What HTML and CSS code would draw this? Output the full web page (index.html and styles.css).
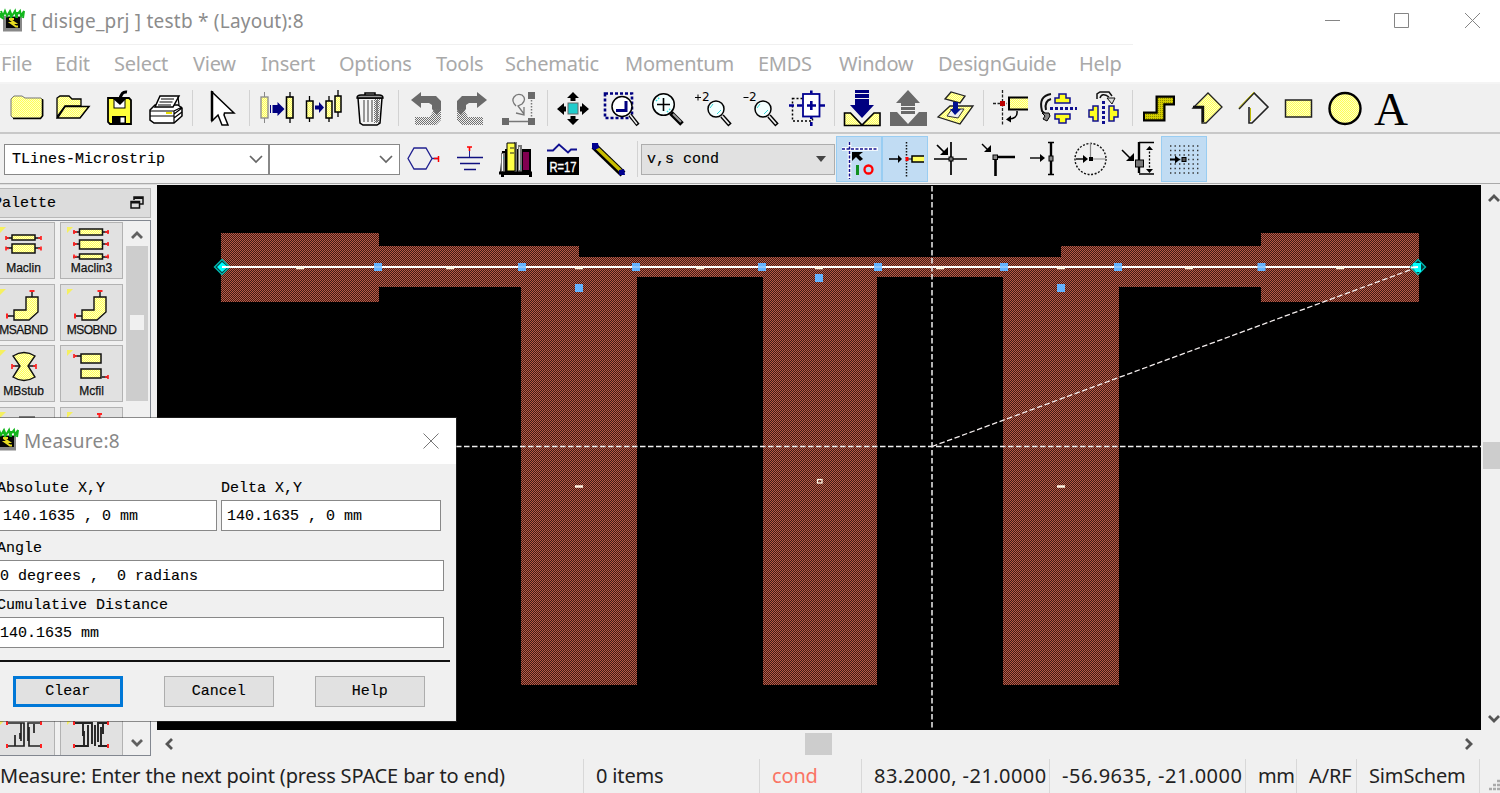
FILE: index.html
```html
<!DOCTYPE html>
<html lang="en">
<head>
<meta charset="utf-8">
<title>testb (Layout):8</title>
<link rel="stylesheet" href="styles.css">
</head>
<body>
<svg class="defs" width="0" height="0">
  <defs>
    <pattern id="yd" width="2" height="2" patternUnits="userSpaceOnUse"><rect width="2" height="2" fill="#ffffc4"/><rect width="1" height="1" fill="#ffff58"/><rect x="1" y="1" width="1" height="1" fill="#ffff58"/></pattern>
    <pattern id="od" width="2" height="2" patternUnits="userSpaceOnUse"><rect width="2" height="2" fill="#d2cc00"/><rect width="1" height="1" fill="#8f8b00"/></pattern>
    <pattern id="gd" width="2" height="2" patternUnits="userSpaceOnUse"><rect width="1" height="1" fill="#707070"/><rect x="1" y="1" width="1" height="1" fill="#707070"/></pattern>
    <pattern id="copper" width="2" height="2" patternUnits="userSpaceOnUse"><rect width="2" height="2" fill="#421a14"/><rect width="1" height="1" fill="#b95b47"/><rect x="1" y="1" width="1" height="1" fill="#b95b47"/></pattern>
    <symbol id="app" viewBox="0 0 24 24" overflow="visible"><rect x="3" y="7" width="19" height="15.500" fill="#888"/><rect x="6" y="8" width="14" height="11" fill="#050505"/><path d="M9 10h5M10 10.500l5 3.500h-4l5 3.500h2" fill="none" stroke="#e8dc20" stroke-width="2"/><path d="M1 2l2 5 2-5 2 5 3-5 2 5 3-5 1 5 4-5 1 5 3-5-1 7M1 4v4l3 2M10 3l1 6M17 3v6" fill="none" stroke="#12b61c" stroke-width="2"/></symbol>
    <symbol id="bend" viewBox="0 0 62 57" overflow="visible"><path d="M21 25h12V12h12v15L36 35H21Z" fill="url(#yd)" stroke="#111" stroke-width="1.400"/><path d="M39 12V7M21 31h-7" stroke="#111" stroke-width="1.400"/><path d="M36.500 6h5M14 28.500v5" stroke="#f22" stroke-width="2"/></symbol>
    <symbol id="corner" viewBox="0 0 62 57"><path d="M7 4h6L7 10z" fill="#f5f060"/></symbol>
  </defs>
</svg>

<div class="window">
  <header class="titlebar">
    <svg class="appicon" viewBox="0 0 24 24"><use href="#app"/></svg>
    <span class="title">[ disige_prj ] testb * (Layout):8</span>
    <svg class="winbtns" viewBox="1320 0 180 44"><path d="M1325 20.500h15M1394.500 13.500h14v14h-14zM1465 13l15 15M1480 13l-15 15" fill="none" stroke="#858585"/></svg>
  </header>
  <nav class="menu"><span>File</span><span>Edit</span><span>Select</span><span>View</span><span>Insert</span><span>Options</span><span>Tools</span><span>Schematic</span><span>Momentum</span><span>EMDS</span><span>Window</span><span>DesignGuide</span><span>Help</span></nav>

  <div class="toolbar main">
    <svg class="tool" viewBox="3 85 46 46"><path d="M11 99l3-3h8l3 2h16l2 2v16l-2 2H13l-2-2z" fill="url(#yd)" stroke="#777"/><path d="M42.500 99v17l-2 2.500H13" fill="none" stroke="#000" stroke-width="1.500"/></svg>
    <svg class="tool" viewBox="49 85 46 46"><path d="M57 117V98l3-2h9l3 3h9v7H65z" fill="url(#yd)" stroke="#000" stroke-width="1.300"/><path d="M57.500 118L65 106.500h24L80 118z" fill="url(#yd)" stroke="#000" stroke-width="1.500"/></svg>
    <svg class="tool" viewBox="95 85 46 46"><path d="M108 98h21l2 2v24h-21l-2-2z" fill="#ffff3a" stroke="#000" stroke-width="1.800"/><rect x="114" y="98" width="11" height="10" fill="#fff" stroke="#000"/><path d="M112 116h14v8h-14z"/><path d="M120.500 117.500h4v5h-4z" fill="#fff"/><path d="M127 92q-6-1-7 8" fill="none" stroke="#000" stroke-width="3"/><path d="M112 98h15l-7 7z"/></svg>
    <svg class="tool" viewBox="141 85 46 46"><path d="M150 110l5-5h23l4 3v8l-8 7h-20l-4-3z" fill="#fff" stroke="#000" stroke-width="1.500"/><path d="M155 107l5-11h19l-6 11z" fill="#fff" stroke="#000" stroke-width="1.500"/><path d="M161 99h13M159.500 102h13M158 105h13M150 111h24v12M150 116h24M174 111l8-4M174 118l8-6M174 114l8-6M178 97l1 8" fill="none" stroke="#000" stroke-width="1.200"/><path d="M166 113h6" stroke="#e5dc00" stroke-width="2"/></svg>
    <i class="sep"></i>
    <svg class="tool" viewBox="198 85 46 46"><path d="M212 92v29l6-6 4 10h6l-4-10 .500-2h9.500z" fill="#fff" stroke="#000" stroke-width="1.500"/><path d="M212 91v30" stroke="#000" stroke-width="2.500"/></svg>
    <i class="sep"></i>
    <svg class="tool" viewBox="255 85 46 46"><path d="M264.500 92v31" stroke="#888"/><rect x="261" y="97" width="7" height="21" fill="url(#yd)" stroke="#888" stroke-width="1.300"/><path d="M290 92v31" stroke="#000" stroke-width="1.300"/><rect x="286.500" y="97" width="6.500" height="21" fill="url(#yd)" stroke="#000" stroke-width="1.600"/><path d="M270 105h1v8h-1zM272.500 105h5v-3l7 7-7 7v-3h-5z" fill="#000080"/></svg>
    <svg class="tool" viewBox="301 85 46 46"><path d="M309.500 96v26M329 96v26M338 90v27" stroke="#000" stroke-width="1.300"/><path d="M306.500 101h6.500v17h-6.500zM326 101h6v17h-6zM335 96h6v16h-6z" fill="url(#yd)" stroke="#000" stroke-width="1.500"/><path d="M315 105.500h4V102l5 5.500-5 5.500v-3.500h-4z" fill="#000080"/></svg>
    <svg class="tool" viewBox="347 85 46 46"><path d="M358 98h24l-2 25-3 2h-14l-3-2z" fill="#f5f5f5" stroke="#000" stroke-width="1.500"/><path d="M374 99h6l-1 24h-5z" fill="url(#gd)"/><path d="M364 100v22M368 100v22M372 100v22M377 100v22" stroke="#666" stroke-width="1.300"/><path d="M357 98q0-3 4-3h18q4 0 4 3z" fill="#999" stroke="#000" stroke-width="1.400"/><path d="M365 95v-2h10v2" fill="none" stroke="#000" stroke-width="1.500"/></svg>
    <i class="sep"></i>
    <svg class="tool" viewBox="404 85 46 46"><path d="M411 100l10-8v4h15l5 5v9l-4 5-5-6v-4l-3-2h-8v5z" fill="#6a6a6a"/><path d="M441 109v11l-5 5h-21v-8h15l4-8z" fill="url(#gd)"/></svg>
    <svg class="tool" viewBox="450 85 46 46"><path d="M487 100l-10-8v4h-15l-5 5v9l4 5 5-6v-4l3-2h8v5z" fill="#6a6a6a"/><path d="M457 109v11l5 5h21v-8h-15l-4-8z" fill="url(#gd)"/></svg>
    <svg class="tool" viewBox="496 85 46 46"><path d="M528 92h7v7h-7zM502 118h7v7h-7zM528 118h7v7h-7z" fill="#6a6a6a"/><path d="M509 121.500h19M516 106q-5-5-2-9 3-4 8-2 5 4 0 9l-4 2 6 8M516 113l8 2v-8" fill="none" stroke="#777" stroke-width="1.300"/><path d="M531.500 100v18" stroke="#777" stroke-width="1.500" stroke-dasharray="1.500 1.500"/></svg>
    <i class="sep"></i>
    <svg class="tool" viewBox="553 85 46 46"><rect x="568" y="103" width="10" height="11" fill="#20cccc" stroke="#666"/><path d="M573 92l6 6h-3.500v3h-5v-3H567zM573 125l6-6h-3.500v-3h-5v3H567zM557 109l7-6v3.500h2v5h-2v3.500zM589 109l-7-6v3.500h-2v5h2v3.500z"/></svg>
    <svg class="tool" viewBox="599 85 46 46"><path d="M605 93.500h27v24.500h-27z" fill="none" stroke="#000080" stroke-width="2.600" stroke-dasharray="3 2"/><path d="M630 115l8 10" stroke="#000" stroke-width="4"/><path d="M630 115l7 9" stroke="#eee" stroke-width="1.500"/><circle cx="622" cy="106.500" r="10" fill="#fff" stroke="#000" stroke-width="1.500"/><path d="M616 110.500h10V101" fill="none" stroke="#000080" stroke-width="3"/></svg>
    <svg class="tool" viewBox="645 85 46 46"><path d="M671 113l11 11" stroke="#000" stroke-width="5"/><path d="M673 114l8 8" stroke="#999" stroke-width="2"/><circle cx="663.500" cy="104.500" r="10.800" fill="#f4ffff" stroke="#000" stroke-width="1.500"/><path d="M656 101l4-4M667 112l4-4" stroke="#30e0e0" stroke-dasharray="1.500 1.500" stroke-width="1.500"/><path d="M657 104.500h13M663.500 98v13" stroke="#000" stroke-width="1.600"/></svg>
    <svg class="tool" viewBox="691 85 46 46"><path d="M695 97.500h6M698 94.500v6" stroke="#000"/><text x="702" y="101" class="zt">2</text><path d="M722 116l8 9" stroke="#000" stroke-width="4.500"/><path d="M722 116l7 8" stroke="#eee" stroke-width="1.800"/><circle cx="716" cy="109" r="8" fill="#f4ffff" stroke="#000" stroke-width="1.500"/><path d="M710 108l3-4M717 114l4-4" stroke="#30d8d8"/></svg>
    <svg class="tool" viewBox="737 85 46 46"><path d="M743.500 97.500h5" stroke="#000"/><text x="749" y="101" class="zt">2</text><path d="M769 116l8 9" stroke="#000" stroke-width="4.500"/><path d="M769 116l7 8" stroke="#eee" stroke-width="1.800"/><circle cx="763" cy="109" r="8" fill="#f4ffff" stroke="#000" stroke-width="1.500"/><path d="M757 108l3-4M764 114l4-4" stroke="#30d8d8"/></svg>
    <svg class="tool" viewBox="783 85 46 46"><path d="M792.500 98.500h20v22.500h-20z" fill="none" stroke="#000" stroke-width="1.500" stroke-dasharray="2 2"/><rect x="803" y="94" width="16.500" height="22.500" fill="#fff" stroke="#000090" stroke-width="1.800"/><path d="M807 105.500h9M811.300 101v9M811.300 90.500v3M811.300 117v2M811.300 122v4M789 105.500h5M797 105.500h5M820 105.500h5" stroke="#000090" stroke-width="2.600"/></svg>
    <i class="sep"></i>
    <svg class="tool" viewBox="840 85 46 46"><path d="M844.500 113h6l11.500 12 12-12h6v12.500h-35.500z" fill="url(#yd)" stroke="#000" stroke-width="1.600"/><path d="M855 90h14v3h-14zM855 94h14v4h-14zM855 99h14v6h5l-12 13-12-13h5z" fill="#000080"/></svg>
    <svg class="tool" viewBox="886 85 46 46"><path d="M890 112h7l11 12 11-12h8v14h-37zM908 90l12 13h-5v3h-14v-3h-5zM901 107h14v3h-14zM901 111h14v3h-14z" fill="#6a6a6a"/></svg>
    <svg class="tool" viewBox="932 85 46 46"><path d="M938 117l12-11h23l-13 18z" fill="url(#yd)" stroke="#222" stroke-width="1.300"/><path d="M947 116l5-7h12l-6 9z" fill="#eee" stroke="#333"/><path d="M945 99l6-7 14 4-5 7z" fill="url(#yd)" stroke="#222" stroke-width="1.300"/><path d="M953 102h5v7h3l-6 6-5-6h3z" fill="#001090"/></svg>
    <i class="sep"></i>
    <svg class="tool" viewBox="989 85 46 46"><path d="M1002.500 90v35M993 103.500h14" stroke="#222" stroke-width="1.300" stroke-dasharray="3 1.500"/><path d="M1028 97.500h-19v12h19" fill="url(#yd)" stroke="#000" stroke-width="2"/><rect x="1000" y="101" width="5" height="5" fill="#b00"/><path d="M1017 111q1 8-9 8" fill="none" stroke="#000" stroke-width="1.500"/><path d="M1006 119.500l5-4v7z"/></svg>
    <svg class="tool" viewBox="1035 85 46 46"><g fill="#ffff20" stroke="#101090" stroke-width="1.500"><path d="M1059 94h7v4h4v5h-15v-5h4zM1055 114h15v5h-4v4h-7v-4h-4z"/></g><path d="M1050 108.500h27" stroke="#101090" stroke-width="3" stroke-dasharray="3 2"/><path d="M1051 94q-13 2-9 17l4 4M1051 99q-7 2-5 11" fill="none" stroke="#111" stroke-width="2"/><path d="M1042 113h7l1 3-3 5-4-2 2-3z" fill="#888" stroke="#000"/></svg>
    <svg class="tool" viewBox="1081 85 46 46"><g fill="#ffff20" stroke="#101090" stroke-width="1.500"><path d="M1098 106v15h-5v-4h-4v-7h4v-4zM1109 106v15h5v-4h4v-7h-4v-4z"/></g><path d="M1103.500 101v25" stroke="#101090" stroke-width="3" stroke-dasharray="3 2"/><path d="M1097 99v-5l3-2h9l3 4M1100 98q2-6 9-1" fill="none" stroke="#111" stroke-width="1.500"/><path d="M1107 98h8l-3 6z" fill="#ddd" stroke="#111"/></svg>
    <i class="sep"></i>
    <svg class="tool" viewBox="1138 85 46 46"><path d="M1143 116.500h17.500v-16H1175" fill="none" stroke="#000" stroke-width="10"/><path d="M1145 116.500h15.500v-16H1173" fill="none" stroke="url(#od)" stroke-width="5.500"/></svg>
    <svg class="tool" viewBox="1184 85 46 46"><path d="M1193 108l15-15 14 14-16 16h-4v-15z" fill="url(#yd)" stroke="#222" stroke-width="1.300"/><path d="M1193 107h10v15" fill="none" stroke="#111" stroke-width="2.400"/></svg>
    <svg class="tool" viewBox="1230 85 46 46"><path d="M1239 109l15-16 14 14-16 16h-3v-16" fill="none" stroke="#222" stroke-width="1.600"/><path d="M1239 107.500l15-15.500" fill="none" stroke="#bdb800" stroke-width=".900"/><path d="M1250.500 108v13" stroke="#bdb800"/></svg>
    <svg class="tool" viewBox="1276 85 46 46"><rect x="1285.500" y="100" width="26" height="17" fill="url(#yd)" stroke="#222" stroke-width="1.500"/></svg>
    <svg class="tool" viewBox="1322 85 46 46"><circle cx="1345" cy="108.500" r="15.500" fill="url(#yd)" stroke="#000" stroke-width="2.400"/></svg>
    <svg class="tool" viewBox="1368 85 46 46"><text x="1391" y="125" class="bigA" textLength="34" lengthAdjust="spacingAndGlyphs">A</text></svg>
  </div>

  <div class="toolbar second">
    <div class="combo c1"><span>TLines-Microstrip</span><svg viewBox="0 0 14 10"><path d="M1 2l6 6 6-6" fill="none" stroke="#666" stroke-width="1.700"/></svg></div>
    <div class="combo c2"><svg viewBox="0 0 14 10"><path d="M1 2l6 6 6-6" fill="none" stroke="#666" stroke-width="1.700"/></svg></div>
    <svg class="tool" viewBox="402 136 46 46"><path d="M414 148h12l6 10.500-6 10.500h-12l-6-10.500zM432 158.500h6" fill="none" stroke="#202090" stroke-width="1.300"/><path d="M434 158.500h5M438.500 156v6" stroke="#f00" stroke-width="1.500"/></svg>
    <svg class="tool" viewBox="448 136 46 46"><path d="M469.500 147v10" stroke="#202090"/><path d="M457 157.500h26M460 163.500h20M464 169.500h12" stroke="#101080" stroke-width="1.700"/><path d="M467 147h5M469.500 147v4" stroke="#f00" stroke-width="1.600"/></svg>
    <svg class="tool" viewBox="494 136 46 46"><path d="M502 151h3v-2h26v24h1v4h-3v-2h-25v2h-3v-4h-1z"/><path d="M501 153h4v19h-4zM514 142h3v30h-3zM518 145h4v27h-4z" fill="#777"/><path d="M507 143h8v28h-8z" fill="#ffff46" stroke="#000"/><path d="M510 148h4M510 153h4" stroke="#222"/><path d="M502 158h2M520 165v5" stroke="#0aa"/><path d="M523 152h6v18h-6z" fill="#800050"/><path d="M499 173h33" stroke="#000" stroke-width="3"/><path d="M502.500 154v17" stroke="#fff"/><path d="M519.500 147v23" stroke="#ddd"/></svg>
    <svg class="tool" viewBox="540 136 46 46"><path d="M547 150.500h6l6-6 9 8 3-3h6" fill="none" stroke="#101090" stroke-width="1.800"/><rect x="547" y="157" width="32" height="18"/><text x="549.500" y="171.500" class="r17" textLength="27" lengthAdjust="spacingAndGlyphs">R=17</text></svg>
    <svg class="tool" viewBox="586 136 46 46"><path d="M594 146l29 28" stroke="#000" stroke-width="7"/><path d="M597 148l24 23" stroke="#c8bd00" stroke-width="3.500"/><path d="M592 143h6l1 5-5 2-2-2zM619 170l5-1 1 6h-6z" fill="#000090"/></svg>
    <i class="sep"></i>
    <div class="combo layer"><span>v,s cond</span><svg viewBox="0 0 12 8"><path d="M1 1h10L6 7z" fill="#444"/></svg></div>
    <svg class="tool on" viewBox="836 137 46 46"><path d="M849.500 143v37M842 150h36" stroke="#fff" stroke-width="3.500"/><path d="M849.500 143v37M842 150h36" stroke="#101090" stroke-width="1.500" stroke-dasharray="3 1.500"/><path d="M852 153h11l-4 3 4 4-3 2-4-4-4 4z"/><path d="M857.500 166v10" stroke="#109020" stroke-width="3"/><circle cx="868.500" cy="170.500" r="4" fill="none" stroke="#f00" stroke-width="2.300"/></svg>
    <svg class="tool on" viewBox="882 137 46 46"><path d="M889 160h10" stroke="#000" stroke-width="1.500"/><path d="M898 156l4 4-4 4z"/><path d="M906.500 143v35" stroke="#111" stroke-dasharray="1.500 1.500" stroke-width="1.500"/><path d="M908 160h4" stroke="#000"/><path d="M924 157h-12v6h12" fill="#ffff60" stroke="#000" stroke-width="1.500"/><path d="M905.500 158h3v4h-3z" fill="#f00"/></svg>
    <svg class="tool" viewBox="928 137 46 46"><path d="M934 160h33M951 143v33M937 146l9 9" stroke="#000" stroke-width="1.700"/><path d="M948 148v8h-8z"/><rect x="949" y="158" width="4" height="4" fill="#777" stroke="#000"/></svg>
    <svg class="tool" viewBox="974 137 46 46"><path d="M995.500 177v-19H1015" fill="none" stroke="#000" stroke-width="2.600"/><path d="M982 145l7 7" stroke="#000" stroke-width="1.400"/><path d="M991 146v7h-7z"/><rect x="993" y="156" width="4.500" height="4.500" fill="#888" stroke="#000"/></svg>
    <svg class="tool" viewBox="1020 137 46 46"><path d="M1030 159h11" stroke="#000" stroke-width="1.400"/><path d="M1040 155l5 4-5 4z"/><path d="M1051 144v31" stroke="#000" stroke-width="2.400"/><path d="M1048 143.500h6M1048 175.500h6" stroke="#000" stroke-width="1.500"/><rect x="1049" y="157" width="4" height="5" fill="#888" stroke="#000"/></svg>
    <svg class="tool" viewBox="1066 137 46 46"><circle cx="1090.500" cy="160" r="15.500" fill="none" stroke="#111" stroke-width="1.400" stroke-dasharray="2 1.600"/><path d="M1090.500 144v16H1106" fill="none" stroke="#888" stroke-width="1.200"/><path d="M1076 160h8" stroke="#000" stroke-width="1.400"/><path d="M1083 156l5 4-5 4zM1089 158h4v4h-4z"/></svg>
    <svg class="tool" viewBox="1112 137 46 46"><path d="M1139 143v31" stroke="#000" stroke-width="2.400"/><path d="M1139 143.500h15M1139 175h15M1122 151l9 9" stroke="#000" stroke-width="1.500"/><path d="M1134 154v8h-8z"/><path d="M1149.500 149v22" stroke="#000" stroke-width="1.300" stroke-dasharray="2 1.500"/><path d="M1146 151l3.500-4 3.500 4zM1146 170l3.500 4 3.500-4z"/><rect x="1135.500" y="161" width="8" height="7" fill="#777" stroke="#000"/></svg>
    <svg class="tool on grid" viewBox="1161 137 46 46"><g stroke="#333" stroke-width="1.400" stroke-dasharray="1.400 3.100"><path d="M1170 147h29M1170 151.500h29M1170 156h29M1170 160.500h29M1170 165h29M1170 169.500h29M1170 174h29"/></g><path d="M1170 160.500h6" stroke="#000" stroke-width="2"/><path d="M1175 156.500l5 4-5 4z"/><rect x="1182" y="158.500" width="4" height="4" fill="#555" stroke="#000"/></svg>
  </div>

  <div class="work">
    <aside class="palette">
      <div class="pal-head"><span>Palette</span><svg viewBox="0 0 14 14"><path d="M4 4V1h9v7h-3M1 5.500h8.500v6.500H1z" fill="none" stroke="#111" stroke-width="1.500"/><path d="M4 2h9M1 6.500h9" stroke="#111" stroke-width="2"/></svg></div>
      <div class="pal-box">
        <div class="pal-grid">
          <button class="part left"><svg viewBox="0 0 62 57"><use href="#corner"/><path d="M13 15h34M13 25h34" stroke="#111" stroke-width="1.300"/><path d="M19 12h23v5H19zM19 21h23v9H19z" fill="url(#yd)" stroke="#111" stroke-width="1.500"/><path d="M13 13v4M48 13v4M13 23.500v4M48 23.500v4M13 15h3M45 15h3M13 25.500h3M45 25.500h3" stroke="#f22" stroke-width="1.700"/></svg><span>Maclin</span></button>
          <button class="part"><svg viewBox="0 0 62 57"><use href="#corner"/><path d="M13 9h36M13 21h36M13 34h36" stroke="#111" stroke-width="1.300"/><path d="M19.500 6h23v6h-23zM19.500 17h23v9h-23zM19.500 31h23v5h-23z" fill="url(#yd)" stroke="#111" stroke-width="1.500"/><path d="M14 7v4M48 7v4M14 19v4M48 19v4M14 31.500v4M48 31.500v4M14 9h3M45 9h3M14 21h3M45 21h3M14 33.500h3M45 33.500h3" stroke="#f22" stroke-width="1.700"/></svg><span>Maclin3</span></button>
          <button class="part left"><svg viewBox="0 0 62 57"><use href="#corner"/><use href="#bend"/></svg><span class="tight">MSABND</span></button>
          <button class="part"><svg viewBox="0 0 62 57"><use href="#corner"/><use href="#bend" x="1"/></svg><span class="tight">MSOBND</span></button>
          <button class="part left"><svg viewBox="0 0 62 57"><use href="#corner"/><path d="M20 20h22" stroke="#111" stroke-width="1.500"/><path d="M20 10q11-7 22 0l-7 10 7 11q-11 7-22 0l7-11z" fill="url(#yd)" stroke="#111" stroke-width="1.400"/><path d="M19 18v5M43 18v5M19 20h3M40 20h3" stroke="#f22" stroke-width="1.700"/></svg><span>MBstub</span></button>
          <button class="part"><svg viewBox="0 0 62 57"><use href="#corner"/><path d="M15 10h6M42 31h6" stroke="#111" stroke-width="1.500"/><path d="M21 8h20v9H21zM21 23h20v9H21z" fill="url(#yd)" stroke="#111" stroke-width="1.500"/><path d="M14 8v4M48 29v4M14 10h3M45 31h3" stroke="#f22" stroke-width="1.700"/></svg><span>Mcfil</span></button>
          <button class="part left"><svg viewBox="0 0 62 57"><use href="#corner"/><path d="M26 9h16" stroke="#111"/></svg></button>
          <button class="part"><svg viewBox="0 0 62 57"><use href="#corner"/><path d="M37 6h5M39.500 6v5" stroke="#f22" stroke-width="2"/></svg></button>
          <button class="part left last"><svg viewBox="0 0 62 57"><use href="#corner"/><path d="M14 8h17v18M28 26V8M14 31h17V8M22 31V20M27 24v-6M41 9v9M47 8H35v18M47 31H36V12" fill="none" stroke="#222" stroke-width="1.700"/><path d="M14 6v4M48 6v4M14 29v4M48 29v4" stroke="#f22" stroke-width="2"/></svg><span>Mlang</span></button>
          <button class="part last"><svg viewBox="0 0 62 57"><use href="#corner"/><path d="M14 8h18v21M14 31h14V10M23 9v12M24 31V16M35 31V10M38 27V8h10M41 31V12M43 9v10M38 31h10" fill="none" stroke="#222" stroke-width="1.900"/><path d="M14 6v4M48 6v4M14 29v4M48 29v4" stroke="#f22" stroke-width="2"/></svg><span>Mlang6</span></button>
        </div>
        <div class="pal-scroll">
          <svg viewBox="0 0 22 24"><path d="M6 16l5-5 5 5" fill="none" stroke="#606060" stroke-width="2.800"/></svg>
          <div class="pal-thumb"><i></i></div>
          <svg class="down" viewBox="0 0 22 24"><path d="M6 9l5 5 5-5" fill="none" stroke="#606060" stroke-width="2.800"/></svg>
        </div>
      </div>
    </aside>

    <main class="drawing">
      <svg class="canvas" viewBox="157 185 1324 545">
        <path fill="url(#copper)" d="M221 233h158v13h200v11h482v-11h200v-13h158v69h-158v-15h-142v398h-116V277H877v408H763V277H637v408H521V287H379v15H221z"/>
        <path d="M222 267h1196" stroke="#fff" stroke-width="2"/>
        <path d="M932 186v545" stroke="#eee" stroke-width="1.500" stroke-dasharray="5.500 2.500"/>
        <path d="M456 446.500h1025" stroke="#eee" stroke-width="1.400" stroke-dasharray="5.500 2.500"/>
        <path d="M932 446.500L1418 267" stroke="#f4eeee" stroke-width="1.300" stroke-dasharray="5.500 2.500"/>
        <path fill="#62b2ff" d="M374 263h8v8h-8zM518 263h8v8h-8zM632 263h8v8h-8zM758 263h8v8h-8zM874 263h8v8h-8zM1000 263h8v8h-8zM1114 263h8v8h-8zM1257.500 263h8v8h-8zM575 284h8v8h-8zM815 274h8v8h-8zM1057 284h8v8h-8z"/>
        <path d="M374 267h8M518 267h8M632 267h8M758 267h8M874 267h8M1000 267h8M1114 267h8M1257 267h8" stroke="#b9dcff" stroke-width="1"/>
        <path d="M296 268h8M446 268h8M575 268h8M696 268h8M815 268h8M936 268h8M1057 268h8M1185 268h8M1336 268h8M575 486.500h8M1057 486.500h8" stroke="#fff4e2" stroke-width="2.500"/>
        <rect x="817.500" y="479.500" width="4.500" height="3.500" fill="none" stroke="#fff4e2" stroke-width="1.300"/>
        <path d="M214.500 267l7.500-7.500 7.500 7.500-7.500 7.500zM1410.500 267l7.500-7.500 7.500 7.500-7.500 7.500z" fill="#043c3c" stroke="#00b8b0" stroke-width="1.400"/>
        <path d="M217 267l5-5 6 5-6 5zM1413 263h8v9h-5l-3-4z" fill="#0ff"/>
        <path d="M222 267h8M1411 267.500l7-.500" stroke="#fff" stroke-width="2"/>
      </svg>
      <div class="hscroll">
        <svg viewBox="0 0 24 26"><path d="M15 8l-5 5 5 5" fill="none" stroke="#555" stroke-width="2.800"/></svg>
        <i class="hthumb"></i>
        <svg viewBox="0 0 24 26"><path d="M9 8l5 5-5 5" fill="none" stroke="#555" stroke-width="2.800"/></svg>
      </div>
    </main>
    <div class="vscroll">
      <svg viewBox="0 0 22 24"><path d="M8 17l5-5 5 5" fill="none" stroke="#555" stroke-width="2.800"/></svg>
      <i class="vthumb"></i>
      <svg viewBox="0 0 22 24"><path d="M8 9l5 5 5-5" fill="none" stroke="#555" stroke-width="2.800"/></svg>
    </div>
  </div>

  <footer class="status">
    <span class="msg">Measure: Enter the next point (press SPACE bar to end)</span><span class="count">0 items</span><span class="cond">cond</span><span>83.2000, -21.0000</span><span>-56.9635, -21.0000</span><span>mm</span><span>A/RF</span><span>SimSchem</span>
    <svg class="grip" viewBox="0 0 20 36"><path d="M17 24h3M13 28h3M17 28h3M9 32h3M13 32h3M17 32h3" stroke="#aaa" stroke-width="2.500"/></svg>
  </footer>

  <section class="dialog">
    <div class="dlg-title"><svg class="appicon" viewBox="0 0 24 24"><use href="#app"/></svg><span>Measure:8</span><svg class="close" viewBox="0 0 16 16"><path d="M.500.500l15 15M15.500.500l-15 15" stroke="#777"/></svg></div>
    <div class="dlg-body">
      <div class="pair">
        <label>Absolute X,Y<input value="140.1635 , 0 mm" readonly></label>
        <label>Delta X,Y<input value="140.1635 , 0 mm" readonly></label>
      </div>
      <label class="angle">Angle<input value="0 degrees ,  0 radians" readonly></label>
      <label class="dist">Cumulative Distance<input value="140.1635 mm" readonly></label>
      <hr>
      <div class="actions"><button class="default">Clear</button><button>Cancel</button><button>Help</button></div>
    </div>
  </section>
</div>
</body>
</html>
```

FILE: styles.css
```css
* { box-sizing: border-box; }
body { margin: 0; background: #f0f0f0; overflow: hidden; font-family: "Noto Sans", sans-serif; }
.defs { position: absolute; }
svg { display: block; flex: none; overflow: visible; }
.window { position: relative; width: 1500px; height: 793px; display: flex; flex-direction: column; overflow: hidden; }
.window > * { flex: none; }

.titlebar { height: 44px; background: #fff; display: flex; align-items: center; color: #8c8c8c; font-size: 19px; }
.appicon { width: 24px; height: 24px; margin-top: -3px; }
.title { margin-left: 6px; margin-top: -3px; white-space: pre; letter-spacing: .22px; }
.winbtns { width: 180px; height: 44px; margin-left: auto; }

.menu { height: 40px; background: linear-gradient(#f0f0f0, #f0f0f0) 0 0 / 1133px 1px no-repeat #fff; border-bottom: 2px solid #f4f4f4; padding-left: 1px; display: grid; grid-template-columns: 54px 59px 79px 68px 78px 97px 69px 120px 133px 81px 99px 141px 60px; align-items: center; font-size: 20px; color: #a9a9a9; letter-spacing: -.25px; white-space: nowrap; }

.toolbar { display: flex; align-items: center; background: #f0f0f0; }
.main { height: 50px; padding: 0 0 0 3px; border-bottom: 2px solid #c8c8c8; }
.second { height: 50px; padding: 1px 0 0 4px; border-bottom: 1px solid #aaa; }
.tool { width: 46px; height: 46px; }
.sep { flex: none; width: 11px; height: 36px; background: linear-gradient(#d2d2d2, #d2d2d2) 5px 0 / 1px 100% no-repeat; }
.second .sep { width: 9px; }
.on { background: #c1dcf3; outline: 1px solid #99cdf2; outline-offset: -1px; }
.grid { margin-left: 3px; }
.zt { font: 12px "DejaVu Sans", sans-serif; }
.bigA { font: 46px "Liberation Serif", serif; text-anchor: middle; }
.r17 { font: 15px "Liberation Sans", sans-serif; fill: #fff; stroke: #fff; stroke-width: .4px; }

.combo { height: 31px; border: 1.500px solid #888; background: #fff; display: flex; align-items: center; justify-content: space-between; padding: 0 7px; font: 15px "Liberation Mono", monospace; -webkit-text-stroke: .15px #000; }
.combo svg { width: 14px; height: 10px; margin-left: auto; }
.c1 { width: 265px; padding-right: 5px; }
.c2 { width: 131px; margin-right: 2px; padding-right: 6px; }
.layer { width: 194px; margin-right: 1px; background: #e1e1e1; border-color: #adadad; padding: 0 7px 0 5px; }
.layer svg { width: 12px; height: 8px; }

.work { height: 573px; display: flex; }
.palette { width: 157px; padding-top: 3px; border-top: 1px solid #ddd; }
.pal-head { width: 151px; height: 30px; background: #dcdcdc; border: 1px solid #b8b8b8; border-left: 0; display: flex; align-items: center; justify-content: space-between; padding-right: 6px; font: 15px "Liberation Mono", monospace; -webkit-text-stroke: .15px #000; }
.pal-head span { margin-left: -7px; }
.pal-head svg { width: 14px; height: 14px; }
.pal-box { width: 151px; height: 536px; margin-top: 2px; border: 1px solid #828790; border-left: 0; padding-top: 1px; display: flex; overflow: hidden; }
.pal-grid { width: 123px; height: 533px; overflow: hidden; display: grid; grid-template-columns: 55px 63px; grid-template-rows: repeat(9, 57px); gap: 4.500px 5px; flex: none; }
.part { position: relative; border: 1.500px solid #b2b2b2; background: #e1e1e1; padding: 0; margin: 0; display: grid; overflow: hidden; color: #111; font: 12px "Liberation Sans", sans-serif; -webkit-text-stroke: .25px #111; }
.part > * { grid-area: 1 / 1; }
.part svg { width: 62px; height: 57px; margin-top: 0; margin-left: -1px; }
.part span { align-self: end; justify-self: center; margin-bottom: 5px; width: 61px; text-align: center; }
.part .tight { letter-spacing: -.5px; }
.part.left { border-left: 0; }
.part.left svg { margin-left: -7px; }
.part.left span { margin-left: -8px; }
.last { grid-row: 9; }
.last span { margin-bottom: 2px; }
.pal-scroll { width: 22px; margin-left: 3px; display: flex; flex-direction: column; }
.pal-scroll svg { width: 22px; height: 24px; }
.pal-thumb { height: 155px; background: #cdcdcd; padding: 69px 0 0 4px; }
.pal-thumb i { display: block; width: 14px; height: 15px; background: #f0f0f0; }
.down { margin-top: auto; }

.drawing { width: 1324px; padding-top: 1px; }
.canvas { width: 1324px; height: 545px; background: #000; overflow: hidden; }
.hscroll { height: 27px; display: flex; align-items: center; }
.hscroll svg { width: 24px; height: 26px; }
.hthumb { width: 27px; height: 22px; margin-left: 624px; margin-right: auto; background: #cdcdcd; }
.vscroll { width: 19px; height: 547px; display: flex; flex-direction: column; justify-content: space-between; }
.vscroll svg { width: 22px; height: 24px; }
.vthumb { width: 17px; height: 27px; margin-left: 2px; margin-bottom: 5px; background: #cdcdcd; }

.status { height: 36px; display: flex; align-items: stretch; font-size: 20px; color: #222; letter-spacing: -.15px; white-space: nowrap; }
.status span { flex: none; border-right: 1px solid #d8d8d8; padding-left: 12px; margin-top: 2px; margin-bottom: 0; line-height: 34px; }
.status .msg { width: 584px; padding-left: 0; }
.status .count { width: 176px; }
.status .cond { width: 102px; color: #fa7464; }
.status span:nth-child(4) { width: 188px; letter-spacing: .45px; }
.status span:nth-child(5) { width: 196px; letter-spacing: .5px; }
.status span:nth-child(6) { width: 51px; letter-spacing: -.5px; }
.status span:nth-child(7) { width: 60px; }
.status span:nth-child(8) { width: 123px; }
.grip { width: 20px; height: 36px; }

.dialog { position: absolute; left: 0; top: 418px; width: 456px; height: 303px; background: #f0f0f0; overflow: hidden; box-shadow: 0 0 0 1px #3338; }
.dlg-title { height: 46px; background: #fff; display: flex; align-items: center; color: #888; font-size: 19px; padding-right: 17px; }
.dlg-title .appicon { margin-left: -6px; }
.dlg-title span { margin-left: 6px; letter-spacing: .25px; }
.close { width: 16px; height: 16px; margin-left: auto; }
.dlg-body { padding: 14px 0 0; font: 15px "Liberation Mono", monospace; -webkit-text-stroke: .12px #000; }
.pair { display: flex; gap: 4px; }
.dlg-body label { display: block; line-height: 22px; text-indent: -3px; }
.dlg-body input { display: block; height: 31px; border: 1.500px solid #888; background: #fff; font: inherit; padding: 2px 5px 0; color: #000; border-radius: 0; text-indent: 0; letter-spacing: 0; }
.pair label:first-child { width: 217px; }
.pair label:first-child input { width: 217px; border-left: 0; padding-left: 3px; }
.pair label:last-child { text-indent: 0; }
.pair label:last-child input { width: 220px; }
.angle, .dist { width: 444px; }
.dlg-body .angle { margin-top: 7px; }
.dlg-body .dist { margin-top: 4px; }
.dlg-body .angle input, .dlg-body .dist input { width: 444px; border-left: 0; padding-left: 0; }
.dlg-body hr { width: 450px; height: 2px; margin: 12px 0 14px; border: 0; background: #111; }
.actions { display: flex; gap: 41.500px; padding-left: 13px; }
.actions button { width: 109.500px; height: 31px; border: 1.500px solid #adadad; background: #e1e1e1; font: inherit; padding: 0; color: #000; -webkit-text-stroke: .12px #000; }
.actions .default { border: 3px solid #0078d7; }
```
